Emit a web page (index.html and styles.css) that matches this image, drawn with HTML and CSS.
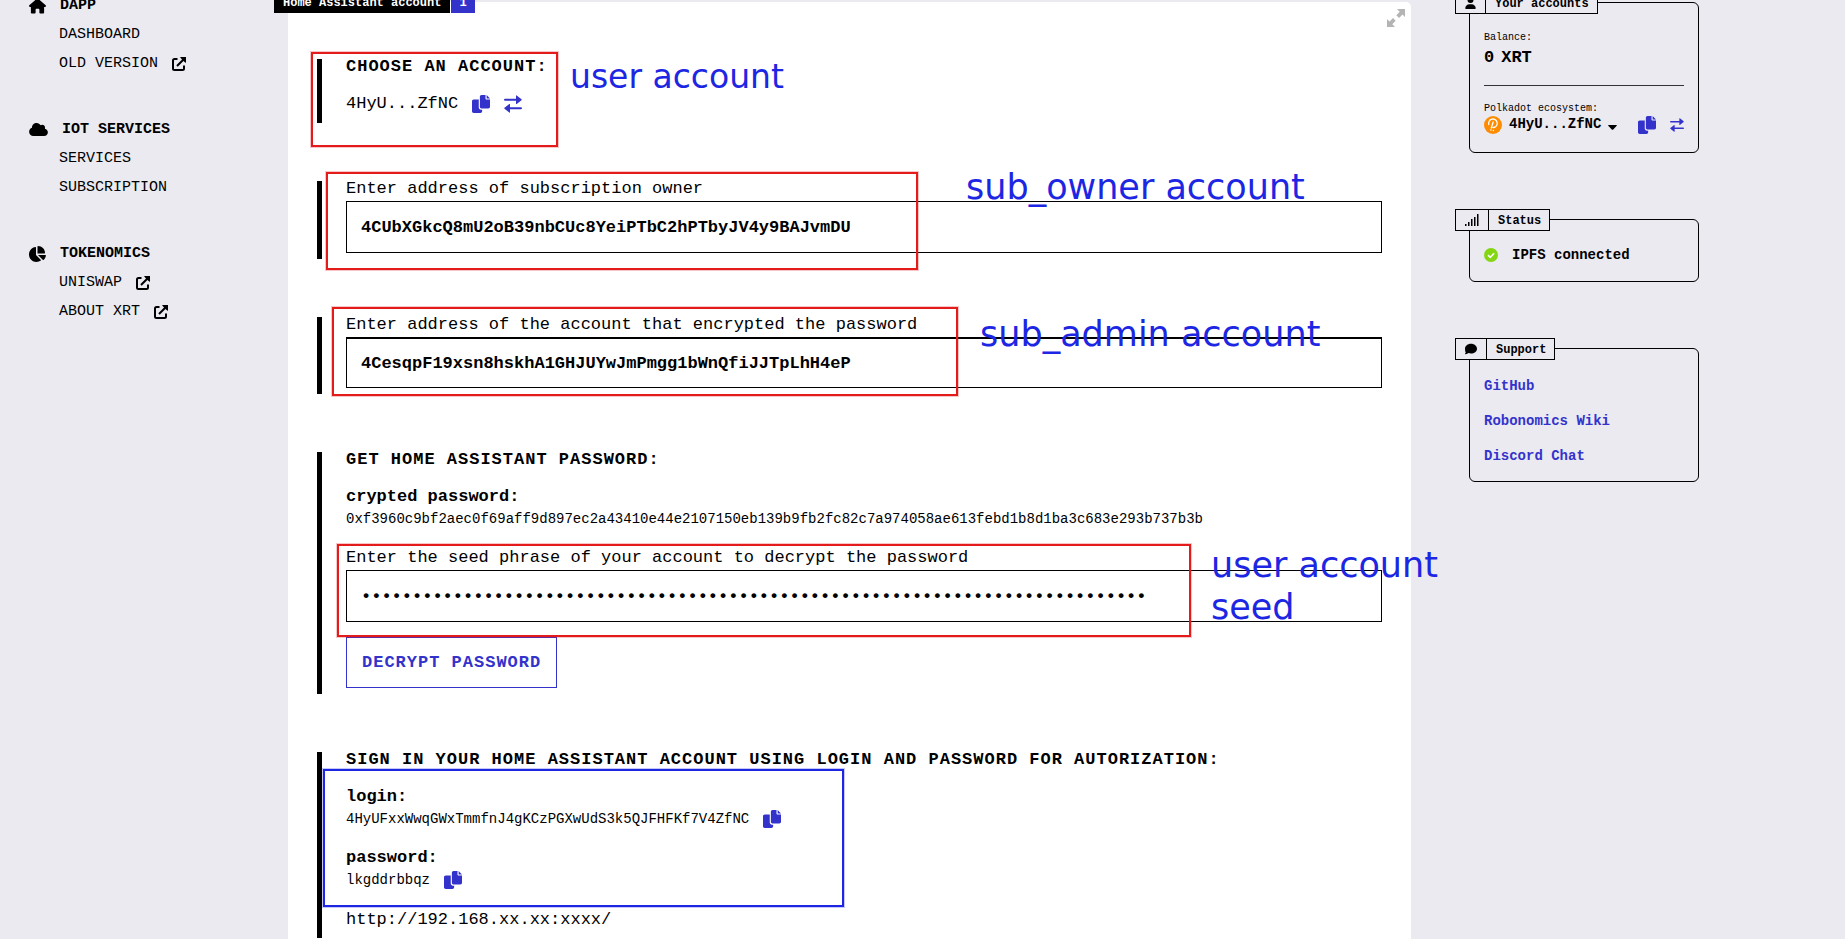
FILE: index.html
```html
<!DOCTYPE html>
<html lang="en">
<head>
<meta charset="utf-8">
<title>Home Assistant account</title>
<link rel="stylesheet" href="styles.css">
</head>
<body>
<svg class="sprite" aria-hidden="true">
  <symbol id="i-house" viewBox="0 0 576 512"><path d="M575.8 255.5c0 18-15 32.1-32 32.1h-32l.7 160.2c0 2.700-.2 5.400-.5 8.100V472c0 22.100-17.900 40-40 40H392c-22.100 0-40-17.900-40-40V384c0-17.700-14.300-32-32-32H256c-17.700 0-32 14.300-32 32v88c0 22.100-17.900 40-40 40H104c-22.100 0-40-17.900-40-40V287.600H32c-18 0-32-14-32-32.100c0-9 3-17 10-24L266.400 8c7-7 15-8 22-8s15 2 21 7L564.800 231.500c8 7 12 15 11 24z"/></symbol>
  <symbol id="i-cloud" viewBox="0 0 640 512"><path d="M0 336c0 79.5 64.5 144 144 144H512c70.7 0 128-57.3 128-128c0-61.9-44-113.6-102.4-125.4c4.1-10.7 6.400-22.4 6.400-34.6c0-53-43-96-96-96c-19.700 0-38.100 6-53.300 16.200C367 64.200 315.300 32 256 32C167.600 32 96 103.600 96 192c0 2.700 .1 5.400 .2 8.100C40.200 219.800 0 273.200 0 336z"/></symbol>
  <symbol id="i-pie" viewBox="32 0 544 512"><path d="M304 240V16.600c0-9 7-16.600 16-16.600C443.700 0 544 100.300 544 224c0 9-7.600 16-16.600 16H304zM32 272C32 150.700 122.100 50.300 239 34.300c9.200-1.300 17 6.100 17 15.400V288L412.500 444.500c6.700 6.700 6.200 17.700-1.500 23.100C371.800 495.600 323.800 512 272 512C139.500 512 32 404.600 32 272zm526.400 16c9.300 0 16.600 7.800 15.400 17c-7.700 55.900-34.600 105.600-73.900 142.300c-6 5.600-15.400 5.200-21.200-.7L320 288H558.400z"/></symbol>
  <symbol id="i-external" viewBox="0 0 14 14"><path d="M5.500 2H2.500Q1 2 1 3.500V11.500Q1 13 2.500 13H10.500Q12 13 12 11.500V8.500M5 9L12 2" fill="none" stroke="currentColor" stroke-width="2"/><path d="M8 0H14V6L12 4.500 9.500 2Z"/></symbol>
  <symbol id="i-copy" viewBox="0 0 512 512"><path d="M384 96L384 0h-112c-26.510 0-48 21.490-48 48v288c0 26.510 21.490 48 48 48H464c26.510 0 48-21.490 48-48V128h-95.100C398.400 128 384 113.600 384 96zM416 0v96h96L416 0zM192 352V128h-144c-26.510 0-48 21.490-48 48v288c0 26.510 21.490 48 48 48h192c26.510 0 48-21.490 48-48L288 416h-32C220.700 416 192 387.300 192 352z"/></symbol>
  <symbol id="i-swap" viewBox="0 0 18 18"><path d="M1 3.700H12V.7Q12 0 12.700 .4L17.500 4.200Q18 4.700 17.500 5.200L12.700 9Q12 9.300 12 8.700V5.700H1Q0 5.700 0 4.700T1 3.700ZM17 12.300H6V9.300Q6 8.700 5.300 9L.5 12.800Q0 13.300 .5 13.800L5.300 17.600Q6 18 6 17.300V14.300H17Q18 14.300 18 13.300T17 12.300Z"/></symbol>
  <symbol id="i-user" viewBox="0 0 448 512"><path d="M224 256A128 128 0 1 0 224 0a128 128 0 1 0 0 256zm-45.700 48C79.800 304 0 383.800 0 482.300C0 498.700 13.300 512 29.700 512H418.300c16.400 0 29.700-13.300 29.700-29.700C448 383.800 368.200 304 269.700 304H178.300z"/></symbol>
  <symbol id="i-signal" viewBox="0 0 14 12"><path d="M0 10h1.500v2H0zM3 8h1.500v4H3zM6 5h1.500v7H6zM9 3h1.500v9H9zM12 0h1.500v12h-1.500z"/></symbol>
  <symbol id="i-comment" viewBox="0 0 512 512"><path d="M512 240c0 114.900-114.600 208-256 208c-37.100 0-72.300-6.400-104.100-17.900c-11.900 8.700-31.300 20.600-54.300 30.600C73.600 471.100 44.700 480 16 480c-6.500 0-12.300-3.900-14.800-9.900c-2.500-6-1.100-12.800 3.400-17.400c5-5 20-25 26.900-49.500C11.900 366.600 0 305 0 240C0 125.100 114.600 32 256 32s256 93.100 256 208z"/></symbol>
  <symbol id="i-expand" viewBox="0 0 18 18"><path d="M10 0H18V8L15.500 5.500 12 9 9.300 6.300 12.700 2.700ZM0 10L2.500 12.500 6 9 8.700 11.700 5.300 15.300 8 18H0Z"/></symbol>
</svg>

<div class="layout">
  <nav class="sidebar" aria-label="Main">
    <section class="nav-group">
      <h2 class="nav-title"><svg class="nav-icon"><use href="#i-house"/></svg>DAPP</h2>
      <a class="nav-link" href="#">DASHBOARD</a>
      <a class="nav-link" href="#">OLD VERSION<svg class="ext-icon"><use href="#i-external"/></svg></a>
    </section>
    <section class="nav-group">
      <h2 class="nav-title"><svg class="nav-icon nav-icon-wide"><use href="#i-cloud"/></svg>IOT SERVICES</h2>
      <a class="nav-link" href="#">SERVICES</a>
      <a class="nav-link" href="#">SUBSCRIPTION</a>
    </section>
    <section class="nav-group">
      <h2 class="nav-title"><svg class="nav-icon"><use href="#i-pie"/></svg>TOKENOMICS</h2>
      <a class="nav-link" href="#">UNISWAP<svg class="ext-icon"><use href="#i-external"/></svg></a>
      <a class="nav-link" href="#">ABOUT XRT<svg class="ext-icon"><use href="#i-external"/></svg></a>
    </section>
  </nav>

  <main class="panel">
    <div class="panel-tag"><h1 class="panel-name">Home Assistant account</h1><span class="panel-count">1</span></div>
    <button class="icon-button expand" type="button" aria-label="Expand"><svg><use href="#i-expand"/></svg></button>

    <section class="step">
      <h2 class="step-title">CHOOSE AN ACCOUNT:</h2>
      <div class="account-row">
        <span>4HyU...ZfNC</span>
        <button class="icon-button" type="button" aria-label="Copy address"><svg><use href="#i-copy"/></svg></button>
        <button class="icon-button" type="button" aria-label="Switch account"><svg><use href="#i-swap"/></svg></button>
      </div>
    </section>

    <section class="step">
      <label class="field-label" for="owner">Enter address of subscription owner</label>
      <input class="field" id="owner" type="text" value="4CUbXGkcQ8mU2oB39nbCUc8YeiPTbC2hPTbyJV4y9BAJvmDU">
    </section>

    <section class="step">
      <label class="field-label" for="admin">Enter address of the account that encrypted the password</label>
      <input class="field field-active" id="admin" type="text" value="4CesqpF19xsn8hskhA1GHJUYwJmPmgg1bWnQfiJJTpLhH4eP">
    </section>

    <section class="step">
      <h2 class="step-title">GET HOME ASSISTANT PASSWORD:</h2>
      <h3 class="value-title">crypted password:</h3>
      <p class="hash">0xf3960c9bf2aec0f69aff9d897ec2a43410e44e2107150eb139b9fb2fc82c7a974058ae613febd1b8d1ba3c683e293b737b3b</p>
      <label class="field-label" for="seed">Enter the seed phrase of your account to decrypt the password</label>
      <input class="field" id="seed" type="password" value="aaaaaaaaaaaaaaaaaaaaaaaaaaaaaaaaaaaaaaaaaaaaaaaaaaaaaaaaaaaaaaaaaaaaaaaaaaaaa">
      <button class="decrypt" type="button">DECRYPT PASSWORD</button>
    </section>

    <section class="step">
      <h2 class="step-title">SIGN IN YOUR HOME ASSISTANT ACCOUNT USING LOGIN AND PASSWORD FOR AUTORIZATION:</h2>
      <h3 class="value-title">login:</h3>
      <div class="value-row">
        <span>4HyUFxxWwqGWxTmmfnJ4gKCzPGXwUdS3k5QJFHFKf7V4ZfNC</span>
        <button class="icon-button" type="button" aria-label="Copy login"><svg><use href="#i-copy"/></svg></button>
      </div>
      <h3 class="value-title">password:</h3>
      <div class="value-row">
        <span>lkgddrbbqz</span>
        <button class="icon-button" type="button" aria-label="Copy password"><svg><use href="#i-copy"/></svg></button>
      </div>
      <p class="server">http://192.168.xx.xx:xxxx/</p>
    </section>

    <div class="mark mark-user"></div>
    <div class="mark mark-owner"></div>
    <div class="mark mark-admin"></div>
    <div class="mark mark-seed"></div>
    <div class="mark mark-result"></div>
    <p class="note note-user">user account</p>
    <p class="note note-owner">sub_owner account</p>
    <p class="note note-admin">sub_admin account</p>
    <p class="note note-seed">user account<br>seed</p>
  </main>

  <aside class="aside">
    <section class="card card-accounts">
      <h2 class="card-tag"><span class="card-icon"><svg class="icon-user"><use href="#i-user"/></svg></span><span class="card-name">Your accounts</span></h2>
      <p class="caption">Balance:</p>
      <p class="balance"><span>0</span><span>XRT</span></p>
      <hr class="rule">
      <p class="caption">Polkadot ecosystem:</p>
      <div class="wallet">
        <svg class="polkadot" viewBox="0 0 18 18"><circle cx="9" cy="9" r="9" fill="#ff8c00"/><path d="M7.300 12L9.200 6M4.800 8.500A4.300 4.300 0 1 1 10 11.500H9" fill="none" stroke="#fff" stroke-width="1.300" stroke-linecap="round"/><circle cx="6.900" cy="14" r=".8" fill="#fff"/><circle cx="9.400" cy="14.500" r=".7" fill="#fff"/></svg>
        <button class="wallet-name" type="button">4HyU...ZfNC<svg class="caret" viewBox="0 0 9 6"><path d="M.5 1H8.500Q9 1.300 8.700 1.700L5 5.700Q4.500 6 4 5.700L.3 1.700Q0 1.300 .5 1Z"/></svg></button>
        <button class="icon-button wallet-copy" type="button" aria-label="Copy address"><svg><use href="#i-copy"/></svg></button>
        <button class="icon-button small" type="button" aria-label="Switch account"><svg><use href="#i-swap"/></svg></button>
      </div>
    </section>

    <section class="card card-status">
      <h2 class="card-tag"><span class="card-icon"><svg class="icon-signal"><use href="#i-signal"/></svg></span><span class="card-name">Status</span></h2>
      <p class="status"><svg class="check" viewBox="0 0 14 14"><circle cx="7" cy="7" r="7" fill="#84d612"/><path d="M4 7.200L6.200 9.300 10.200 5.200" fill="none" stroke="#fff" stroke-width="1.600"/></svg>IPFS connected</p>
    </section>

    <section class="card card-support">
      <h2 class="card-tag"><span class="card-icon"><svg class="icon-comment"><use href="#i-comment"/></svg></span><span class="card-name">Support</span></h2>
      <a class="support-link" href="#">GitHub</a>
      <a class="support-link" href="#">Robonomics Wiki</a>
      <a class="support-link" href="#">Discord Chat</a>
    </section>
  </aside>
</div>
</body>
</html>
```

FILE: styles.css
```css
:root {
  --page: #ebeaf0;
  --ink: #000;
  --accent: #3333cc;
  --mark: #e31b1b;
  --note: #1c26e3;
}

* { box-sizing: border-box; }

body {
  margin: 0;
  background: var(--page);
  color: var(--ink);
  font-family: "Liberation Mono", "Courier New", monospace;
  font-size: 17px;
  line-height: 16px;
}

h1, h2, h3, p { margin: 0; font-size: inherit; }
a { text-decoration: none; }
svg { display: block; fill: currentColor; flex: none; }
.sprite { position: absolute; width: 0; height: 0; }

button, input { font: inherit; color: inherit; }

.layout {
  display: grid;
  grid-template-columns: 288px minmax(0, 1fr) 434px;
  min-height: 100vh;
  overflow: hidden;
}

/* Sidebar */
.sidebar {
  display: flex;
  flex-direction: column;
  gap: 37px;
  margin-top: -9px;
  padding-left: 29px;
  font-size: 15px;
  line-height: 29px;
}
.nav-title { display: flex; align-items: center; gap: 14px; }
.nav-icon { width: 17px; height: 16px; }
.nav-icon-wide { width: 19px; height: 15px; }
.nav-link {
  display: flex;
  align-items: center;
  gap: 14px;
  padding-left: 30px;
  color: inherit;
}
.ext-icon { width: 14px; height: 14px; }

/* Main panel */
.panel {
  position: relative;
  display: flex;
  flex-direction: column;
  gap: 58px;
  margin-top: 2px;
  padding: 57px 29px 0;
  background: #fff;
  border-radius: 5px 5px 0 0;
}
.panel-tag {
  position: absolute;
  top: -13px;
  left: -14px;
  display: flex;
  gap: 1px;
  color: #fff;
  font-size: 12px;
  font-weight: bold;
  line-height: 20px;
}
.panel-name { padding: 4px 9px 0; background: #000; }
.panel-count { padding: 4px 8px 0; background: var(--accent); }

.icon-button {
  display: block;
  width: 18px;
  height: 18px;
  padding: 0;
  border: 0;
  background: none;
  color: var(--accent);
  cursor: pointer;
}
.icon-button svg { width: 100%; height: 100%; }
.icon-button.small { width: 14px; height: 14px; }
.icon-button.expand {
  position: absolute;
  top: 7px;
  right: 6px;
  color: #b4b4b4;
}

.step {
  display: flex;
  flex-direction: column;
  align-items: flex-start;
  padding: 0 0 6px 24px;
  border-left: 5px solid #000;
}
.step:first-of-type { padding-bottom: 9px; }
.step-title { letter-spacing: 1px; }
.account-row { display: flex; align-items: center; gap: 14px; height: 20px; margin-top: 19px; }
.field-label { display: block; }
.field {
  width: 100%;
  height: 52px;
  margin-top: 4px;
  padding: 0 14px;
  border: 1px solid #000;
  border-radius: 0;
  background: none;
  font-weight: bold;
  outline: none;
}
.field-active { height: 51px; border-top-width: 2px; }
.value-title { margin-top: 21px; }
.hash { margin: 6px 0 23px; font-size: 14px; overflow-wrap: anywhere; }
.decrypt {
  height: 51px;
  margin-top: 15px;
  padding: 0 15px;
  border: 1px solid var(--accent);
  background: #fff;
  color: var(--accent);
  font-weight: bold;
  letter-spacing: 1px;
}
.value-row {
  display: flex;
  align-items: center;
  gap: 14px;
  height: 20px;
  margin-top: 4px;
  font-size: 14px;
}
.server { margin: 22px 0 4px; }

/* Callouts laid over the form */
.mark {
  position: absolute;
  border: 2px solid var(--mark);
  box-shadow: 0 0 0 1px #e31b1b40;
}
.mark-user { left: 23px; top: 50px; width: 247px; height: 95px; }
.mark-owner { left: 38px; top: 170px; width: 592px; height: 98px; }
.mark-admin { left: 44px; top: 305px; width: 626px; height: 89px; }
.mark-seed { left: 49px; top: 542px; width: 854px; height: 93px; }
.mark-result {
  left: 35px;
  top: 767px;
  width: 521px;
  height: 138px;
  border-color: var(--note);
  box-shadow: 0 0 0 1px #1c26e340;
}
.note {
  position: absolute;
  color: var(--note);
  font-family: "DejaVu Sans", sans-serif;
  font-size: 35px;
  line-height: 42px;
  white-space: nowrap;
}
.note-user { left: 282px; top: 56px; font-size: 33px; line-height: 38px; }
.note-owner { left: 678px; top: 164px; }
.note-admin { left: 692px; top: 311px; }
.note-seed { left: 923px; top: 542px; }

/* Right column */
.aside {
  display: flex;
  flex-direction: column;
  gap: 66px;
  padding: 2px 146px 0 58px;
}
.card {
  position: relative;
  border: 1px solid #000;
  border-radius: 6px;
  font-size: 14px;
  font-weight: bold;
}
.card-accounts { padding: 29px 14px 17px; }
.card-status { padding: 25px 14px 16px; }
.card-support { padding: 20px 14px 7px; }
.card-tag {
  position: absolute;
  top: -11px;
  left: -15px;
  display: flex;
  border: 1px solid #000;
  background: var(--page);
  font-size: 12px;
  line-height: 18px;
}
.card-icon { display: flex; align-items: center; padding: 0 9px; border-right: 1px solid #000; }
.card-name { padding: 2px 8px 0 9px; }
.icon-user { width: 11px; height: 12px; }
.icon-signal { width: 14px; height: 12px; }
.icon-comment { width: 12px; height: 12px; }
.caption { font-size: 10px; font-weight: normal; line-height: 12px; }
.balance { display: flex; gap: 7px; margin-top: 4px; font-size: 17px; line-height: 20px; }
.rule { height: 1px; margin: 17px 0; border: 0; background: #333; }
.wallet { display: flex; align-items: center; height: 20px; }
.polkadot { width: 18px; height: 18px; }
.wallet-name {
  display: flex;
  align-items: center;
  gap: 7px;
  margin: 0 auto 0 7px;
  padding: 0 0 2px;
  border: 0;
  background: none;
}
.caret { width: 9px; height: 6px; margin-top: 6px; }
.wallet-copy { margin-right: 14px; }
.status { display: flex; align-items: center; gap: 14px; line-height: 20px; }
.check { width: 14px; height: 14px; }
.support-link { display: block; color: var(--accent); line-height: 35px; }
```
